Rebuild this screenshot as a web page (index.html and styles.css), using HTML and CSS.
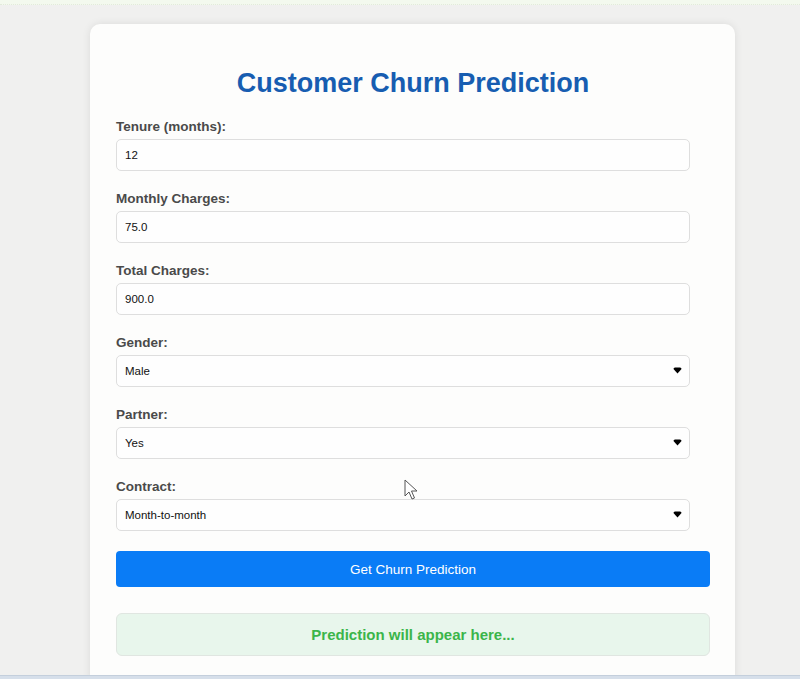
FILE: index.html
```html
<!DOCTYPE html>
<html lang="en">
<head>
<meta charset="utf-8">
<title>Customer Churn Prediction</title>
<link rel="stylesheet" href="styles.css">
</head>
<body>
<div class="topbar"></div>
<main class="page">
  <div class="card">
    <h1 class="title">Customer Churn Prediction</h1>
    <form class="form">
      <div class="group">
        <label class="label" for="tenure">Tenure (months):</label>
        <input class="field" id="tenure" type="text" value="12">
      </div>
      <div class="group">
        <label class="label" for="monthly">Monthly Charges:</label>
        <input class="field" id="monthly" type="text" value="75.0">
      </div>
      <div class="group">
        <label class="label" for="total">Total Charges:</label>
        <input class="field" id="total" type="text" value="900.0">
      </div>
      <div class="group">
        <label class="label" for="gender">Gender:</label>
        <div class="select-wrap">
          <select class="field select" id="gender"><option>Male</option><option>Female</option></select>
          <svg class="arrow" width="9" height="7" viewBox="0 0 9 7"><path d="M0.5 2 Q0.5 0.5 2 0.5 H7 Q8.5 0.5 8.5 2 L4.5 6.5 Z" fill="#000"/></svg>
        </div>
      </div>
      <div class="group">
        <label class="label" for="partner">Partner:</label>
        <div class="select-wrap">
          <select class="field select" id="partner"><option>Yes</option><option>No</option></select>
          <svg class="arrow" width="9" height="7" viewBox="0 0 9 7"><path d="M0.5 2 Q0.5 0.5 2 0.5 H7 Q8.5 0.5 8.5 2 L4.5 6.5 Z" fill="#000"/></svg>
        </div>
      </div>
      <div class="group">
        <label class="label" for="contract">Contract:</label>
        <div class="select-wrap">
          <select class="field select" id="contract"><option>Month-to-month</option><option>One year</option><option>Two year</option></select>
          <svg class="arrow" width="9" height="7" viewBox="0 0 9 7"><path d="M0.5 2 Q0.5 0.5 2 0.5 H7 Q8.5 0.5 8.5 2 L4.5 6.5 Z" fill="#000"/></svg>
        </div>
      </div>
      <button class="submit" type="button">Get Churn Prediction</button>
    </form>
    <div class="result">Prediction will appear here...</div>
  </div>
</main>
<svg class="cursor" width="14" height="22" viewBox="0 0 14 22"><path d="M1 1 L1 17 L5 13 L8 20 L10.5 19 L7.5 12 L13 12 Z" fill="#fff" stroke="#555" stroke-width="1" stroke-linejoin="round"/></svg>
<div class="bottombar"></div>
</body>
</html>
```
FILE: styles.css
```css
html, body {
  margin: 0;
  padding: 0;
  height: 100%;
  overflow: hidden;
}
body {
  background: #f0f0ef;
  font-family: "Liberation Sans", Arial, sans-serif;
}
.topbar {
  height: 5px;
  background: #f3f9ee;
  border-bottom: 1px dotted #e2eadb;
  box-sizing: border-box;
}
.page {
  padding: 19px 0 0 90px;
}
.card {
  width: 594px;
  padding: 25px 25px 30px 26px;
  background: #fdfdfc;
  border-radius: 10px;
  box-shadow: 0 0 8px rgba(0, 0, 0, 0.09);
}
.title {
  margin: 19px 0 20px;
  font-size: 27px;
  line-height: 31px;
  font-weight: bold;
  text-align: center;
  color: #175db1;
}
.form {
  margin: 0;
}
.group {
  margin-bottom: 20px;
}
.label {
  display: block;
  font-size: 13.5px;
  line-height: 16px;
  font-weight: bold;
  color: #4a4a4a;
  margin-bottom: 4px;
}
.field {
  display: block;
  box-sizing: border-box;
  width: calc(100% - 20px);
  height: 32px;
  margin: 0;
  padding: 0 8px;
  border: 1px solid #dedede;
  border-radius: 5px;
  background: #fefefe;
  font-family: "Liberation Sans", Arial, sans-serif;
  font-size: 11.5px;
  color: #111;
  outline: none;
}
.select-wrap {
  position: relative;
  width: calc(100% - 20px);
}
.select-wrap .select {
  width: 100%;
  appearance: none;
  -webkit-appearance: none;
  padding-left: 8px;
}
.arrow {
  position: absolute;
  right: 8px;
  top: 12px;
  pointer-events: none;
}
.submit {
  display: block;
  width: 100%;
  height: 36px;
  margin: 0;
  border: none;
  border-radius: 4px;
  background: #0a7cf6;
  color: #fff;
  font-family: "Liberation Sans", Arial, sans-serif;
  font-size: 13.5px;
}
.result {
  margin-top: 26px;
  box-sizing: border-box;
  height: 43px;
  border: 1px solid #e0e6e1;
  border-radius: 6px;
  background: #e8f6ec;
  color: #3bb54a;
  font-size: 15px;
  font-weight: bold;
  text-align: center;
  line-height: 41px;
}
.cursor {
  position: fixed;
  left: 404px;
  top: 479px;
}
.bottombar {
  position: fixed;
  left: 0;
  right: 0;
  bottom: 0;
  height: 3px;
  background: #d6dfea;
  border-top: 1px solid #c4cfdc;
}
```
